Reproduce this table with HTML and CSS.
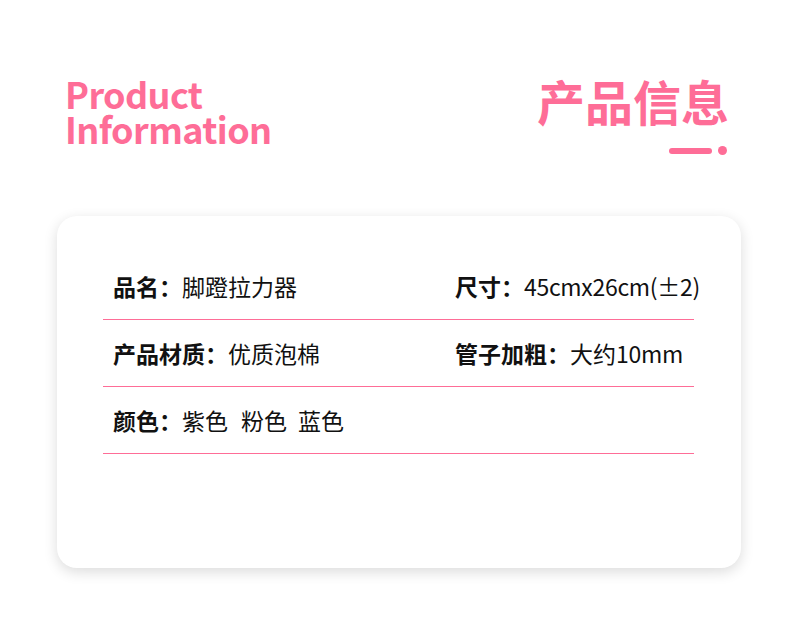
FILE: index.html
```html
<!DOCTYPE html>
<html lang="zh-CN">
<head>
<meta charset="utf-8">
<title>产品信息</title>
<link rel="stylesheet" href="styles.css">
</head>
<body>
<div class="page">
  <header class="head">
    <h1 class="en-title">Product<br>Information</h1>
    <div class="cn-block">
      <h2 class="cn-title">产品信息</h2>
      <div class="deco"><span class="bar"></span><span class="dot"></span></div>
    </div>
  </header>
  <section class="card">
    <div class="list">
      <div class="row">
        <div class="cell"><b>品名：</b>脚蹬拉力器</div>
        <div class="cell"><b>尺寸：</b><span class="latin">45cmx26cm(±2)</span></div>
      </div>
      <div class="row">
        <div class="cell"><b>产品材质：</b>优质泡棉</div>
        <div class="cell"><b>管子加粗：</b>大约<span class="latin">10mm</span></div>
      </div>
      <div class="row">
        <div class="cell"><b>颜色：</b><span class="opt opt-a">紫色</span><span class="opt opt-b">粉色</span><span class="opt">蓝色</span></div>
      </div>
    </div>
  </section>
</div>
</body>
</html>
```

FILE: styles.css
```css
* { box-sizing: border-box; }
html, body { margin: 0; padding: 0; background: #fff; }
body {
  width: 790px;
  height: 643px;
  overflow: hidden;
  font-family: "Noto Sans CJK SC", "Noto Sans", sans-serif;
  color: #111;
}
.page { padding-top: 76px; }
.head {
  display: flex;
  justify-content: space-between;
  align-items: flex-start;
  padding: 0 61px 0 65px;
  height: 140px;
}
.en-title {
  margin: 0;
  font-size: 36px;
  line-height: 35px;
  font-weight: 700;
  color: #fe6d97;
  letter-spacing: -0.6px;
}
.cn-block { display: flex; flex-direction: column; align-items: flex-end; }
.cn-title {
  margin: 0;
  margin-top: -8px;
  font-size: 48px;
  line-height: 64px;
  font-weight: 700;
  color: #fe6d97;
}
.deco { display: flex; align-items: center; gap: 6px; margin-top: 14px; margin-right: 2px; }
.bar { width: 43px; height: 6px; border-radius: 3px; background: #fe6d97; }
.dot { width: 9px; height: 9px; border-radius: 50%; background: #fe6d97; }
.card {
  margin-left: 57px;
  width: 684px;
  height: 352px;
  background: #fff;
  border-radius: 20px;
  box-shadow: 0 4px 14px rgba(0,0,0,0.14);
  padding: 37px 0 0 46px;
}
.list { width: 591px; }
.row {
  display: grid;
  grid-template-columns: 342px 1fr;
  padding-left: 10px;
  height: 67px;
  border-bottom: 1px solid #fe6d97;
  align-items: center;
}
.cell {
  font-size: 23px;
  line-height: 32px;
  color: #111;
  white-space: nowrap;
}
.cell b { font-weight: 700; }
.latin { letter-spacing: -0.3px; }
.opt-a { margin-right: 13px; }
.opt-b { margin-right: 11px; }
```
